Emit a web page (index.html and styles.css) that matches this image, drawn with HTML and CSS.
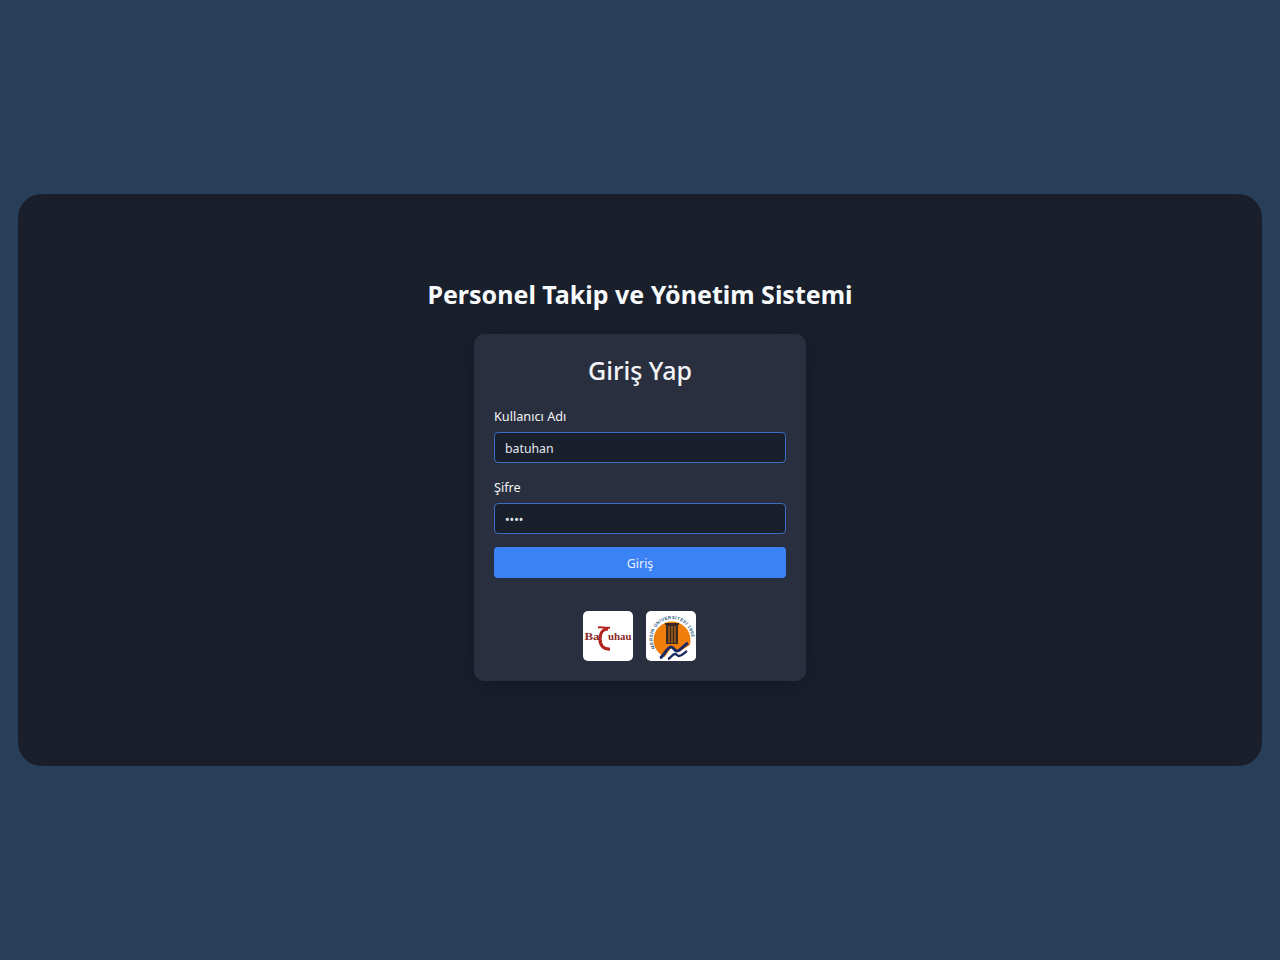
FILE: index.html

```html
<!DOCTYPE html>
<html lang="tr">
<head>
  <meta charset="UTF-8" />
  <meta name="viewport" content="width=device-width, initial-scale=1.0"/>
  <title>Personel Takip ve Yönetim Sistemi</title>
  <link rel="stylesheet" href="styles.css">
</head>
<body>
  <main class="panel">
    <h1 class="page-title">Personel Takip ve Yönetim Sistemi</h1>

    <form class="login-card">
      <h2 class="login-title">Giriş Yap</h2>

      <label class="field-label" for="username">Kullanıcı Adı</label>
      <input class="field-input" type="text" id="username" value="batuhan">

      <label class="field-label" for="password">Şifre</label>
      <input class="field-input" type="password" id="password" value="1234">

      <button class="login-button" type="button">Giriş</button>

      <div class="logos">
        <div class="logo">
          <svg viewBox="0 0 50 50" width="50" height="50">
            <path d="M15 16.500c3-1 7 1 12 0" fill="none" stroke="#b3251f" stroke-width="2"/>
            <path d="M25 18c-5 0-8 4-8 10 0 7 4 10.500 10 10" fill="none" stroke="#b3251f" stroke-width="3.200"/>
            <text class="logo-text" x="1.500" y="29" textLength="15" lengthAdjust="spacingAndGlyphs">Ba</text>
            <text class="logo-text" x="25" y="29" textLength="23.500" lengthAdjust="spacingAndGlyphs">uhau</text>
          </svg>
        </div>
        <div class="logo">
          <svg viewBox="0 0 50 50" width="50" height="50">
            <circle cx="26" cy="29" r="18.500" fill="#ef7f0a"/>
            <path d="M16 50L25 37L33 41L50 30V50Z" fill="#fff"/>
            <path d="M19 12h14v2h-1v19H20V14h-1z" fill="#3a2a22"/>
            <path d="M23 15v17M26 15v17M29 15v17" stroke="#d9780f" stroke-width="1"/>
            <path d="M14 47c4-2 7-11 11-11 3 0 3 4 6 4 3 0 6-5 11-8" fill="none" stroke="#1b2a63" stroke-width="3"/>
            <path d="M22 48c3-1 4-5 7-5 2 0 2 2 4 2 3 0 5-3 8-5" fill="none" stroke="#1b2a63" stroke-width="2.400"/>
            <path id="arc" d="M9 37A19.500 19.500 0 1 1 45.500 27" fill="none"/>
            <text class="logo-arc"><textPath href="#arc" textLength="69">MERSİN ÜNİVERSİTESİ 1992</textPath></text>
          </svg>
        </div>
      </div>
    </form>
  </main>
</body>
</html>
```

FILE: styles.css

```css
* {
  box-sizing: border-box;
}
body {
  margin: 0;
  height: 960px;
  background: #283f59;
  color: #f3f4f6;
  font-family: "Noto Sans", "Open Sans", sans-serif;
  display: flex;
  align-items: center;
  justify-content: center;
  overflow: hidden;
}
.panel {
  width: 1244px;
  height: 572px;
  padding-bottom: 4px;
  background: #1a1f2c;
  border-radius: 24px;
  display: flex;
  flex-direction: column;
  align-items: center;
  justify-content: center;
}
.page-title {
  margin: 0 0 21px;
  font-size: 25px;
  line-height: 38px;
  font-weight: 700;
  color: #f7fafc;
}
.login-card {
  width: 332px;
  height: 347px;
  padding: 19px 20px 20px;
  background: #2a2f3f;
  border-radius: 10px;
  box-shadow: 0 4px 24px rgba(0, 0, 0, 0.25);
}
.login-title {
  margin: 0 0 19px;
  font-size: 25px;
  line-height: 34px;
  font-weight: 500;
  text-align: center;
}
.field-label {
  display: block;
  margin-bottom: 6px;
  font-size: 12.700px;
  line-height: 20px;
}
.field-input {
  display: block;
  width: 100%;
  height: 31px;
  margin-bottom: 14px;
  padding: 2px 10px 0;
  background: #1a1f2c;
  border: 1px solid #3b6cc4;
  border-radius: 4px;
  color: #e2e8f0;
  font-family: inherit;
  font-size: 12.300px;
}
.login-button {
  display: block;
  width: 100%;
  height: 31px;
  margin-top: -1px;
  padding-top: 2px;
  background: #3b82f6;
  border: none;
  border-radius: 4px;
  color: #e6effd;
  font-family: inherit;
  font-size: 12.500px;
}
.logos {
  display: flex;
  justify-content: center;
  gap: 13px;
  margin-top: 33px;
  padding-right: 1px;
}
.logo {
  width: 50px;
  height: 50px;
  background: #fff;
  border-radius: 5px;
  overflow: hidden;
}
.logo svg {
  display: block;
}
.logo-text {
  font-family: "Liberation Serif", serif;
  font-size: 11px;
  font-weight: 700;
  fill: #8e2a26;
}
.logo-arc {
  font-family: "Liberation Sans", sans-serif;
  font-size: 4.400px;
  font-weight: 700;
  fill: #24507c;
}
```
